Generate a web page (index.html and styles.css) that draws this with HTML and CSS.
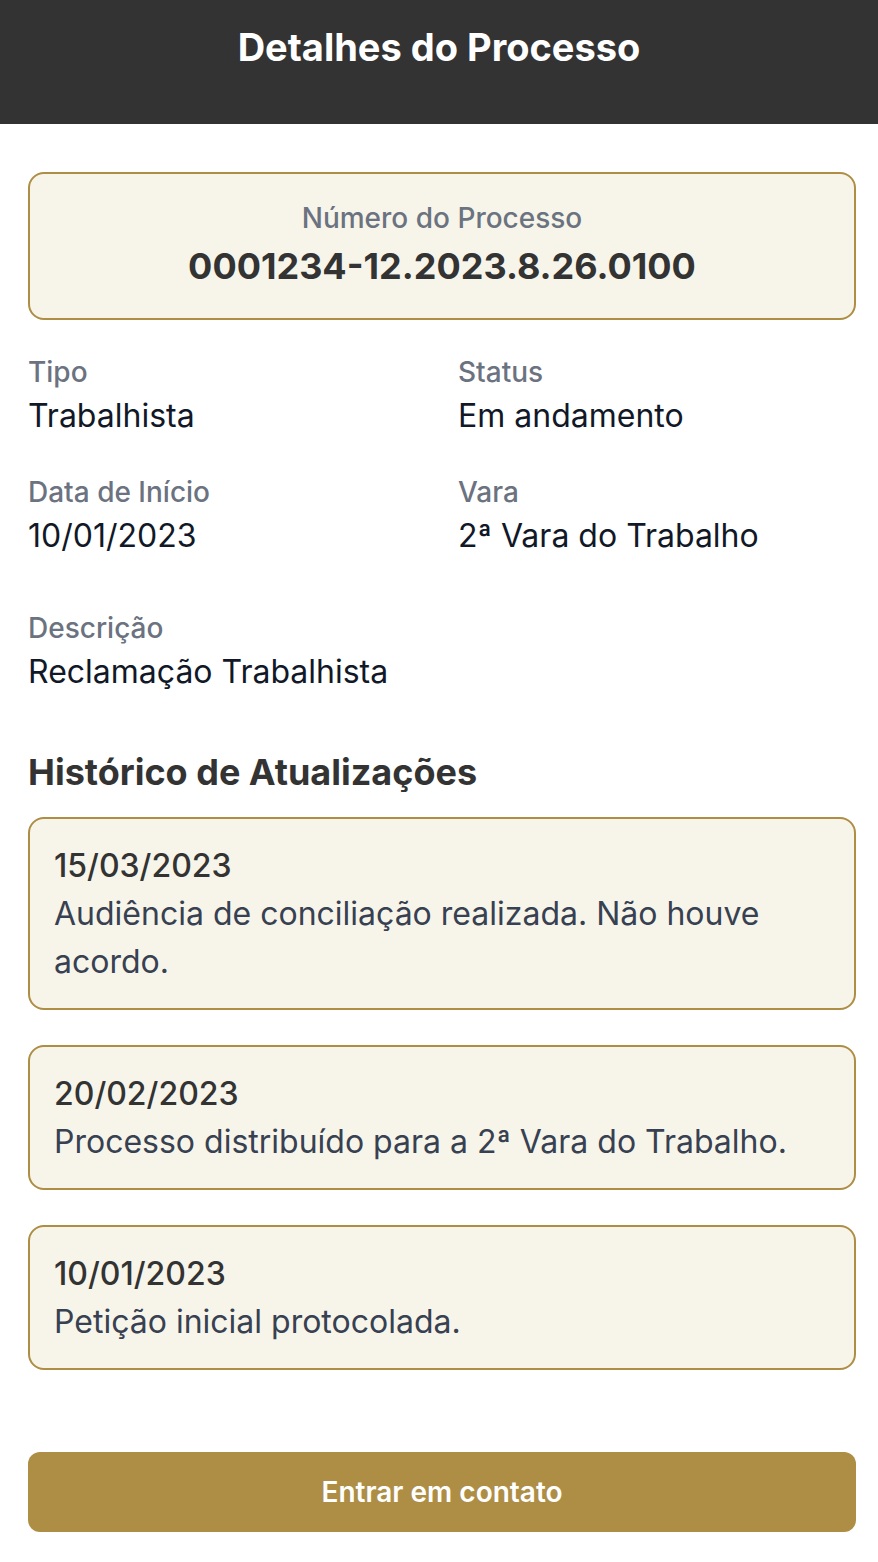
FILE: index.html
```html
<!DOCTYPE html>
<html lang="pt-BR">
<head>
    <meta charset="UTF-8">
    <title>Detalhes do Processo</title>
    <link rel="stylesheet" href="styles.css">
</head>
<body>
    <header class="topbar">
        <h1>Detalhes do Processo</h1>
    </header>

    <main class="content">
        <!-- número do processo -->
        <section class="process-number">
            <div class="process-label">Número do Processo</div>
            <div class="process-value">0001234-12.2023.8.26.0100</div>
        </section>

        <div class="info-grid">
            <div class="field">
                <div class="field-label">Tipo</div>
                <div class="field-value">Trabalhista</div>
            </div>
            <div class="field">
                <div class="field-label">Status</div>
                <div class="field-value">Em andamento</div>
            </div>
            <div class="field">
                <div class="field-label">Data de Início</div>
                <div class="field-value">10/01/2023</div>
            </div>
            <div class="field">
                <div class="field-label">Vara</div>
                <div class="field-value">2ª Vara do Trabalho</div>
            </div>
        </div>

        <div class="field description">
            <div class="field-label">Descrição</div>
            <div class="field-value">Reclamação Trabalhista</div>
        </div>

        <!-- histórico -->
        <h2 class="section-title">Histórico de Atualizações</h2>
        <div class="history">
            <div class="history-card">
                <div class="history-date">15/03/2023</div>
                <div class="history-text">Audiência de conciliação realizada. Não houve acordo.</div>
            </div>
            <div class="history-card">
                <div class="history-date">20/02/2023</div>
                <div class="history-text">Processo distribuído para a 2ª Vara do Trabalho.</div>
            </div>
            <div class="history-card">
                <div class="history-date">10/01/2023</div>
                <div class="history-text">Petição inicial protocolada.</div>
            </div>
        </div>

        <button class="contact-btn">Entrar em contato</button>
    </main>
</body>
</html>
```

FILE: styles.css
```css
:root {
    --dark: #333333;
    --gold: #ae8e45;
    --cream: #f7f5ea;
    --muted: #6b7280;
}

* {
    box-sizing: border-box;
}

body {
    margin: 0;
    font-family: Inter, "Noto Sans", sans-serif;
    background: #fff;
    color: #111827;
}

.topbar {
    background: var(--dark);
    color: #fff;
    height: 124px;
    padding-top: 24px;
    text-align: center;
}

.topbar h1 {
    margin: 0;
    font-size: 38px;
    line-height: 46px;
    font-weight: 700;
}

.content {
    padding: 48px 22px 32px 28px;
}

.process-number {
    background: var(--cream);
    border: 2px solid var(--gold);
    border-radius: 16px;
    padding: 26px 16px 26px;
    text-align: center;
    margin-bottom: 34px;
}

.process-label {
    color: var(--muted);
    font-size: 28px;
    line-height: 36px;
    font-weight: 500;
}

.process-value {
    margin-top: 4px;
    color: var(--dark);
    font-size: 36px;
    line-height: 52px;
    font-weight: 700;
}

.info-grid {
    display: grid;
    grid-template-columns: 1fr 1fr;
    column-gap: 32px;
    row-gap: 36px;
}

.field-label {
    color: var(--muted);
    font-size: 28px;
    line-height: 36px;
    font-weight: 500;
}

.field-value {
    margin-top: 4px;
    font-size: 32px;
    line-height: 44px;
}

.description {
    margin-top: 52px;
}

.section-title {
    margin: 54px 0 21px;
    color: var(--dark);
    font-size: 36px;
    line-height: 48px;
    font-weight: 700;
}

.history {
    display: flex;
    flex-direction: column;
    gap: 35px;
}

.history-card {
    background: var(--cream);
    border: 2px solid var(--gold);
    border-radius: 16px;
    padding: 25px 24px 22px;
}

.history-date {
    color: var(--dark);
    font-size: 32px;
    line-height: 44px;
    font-weight: 500;
    margin-bottom: 2px;
}

.history-text {
    color: #374151;
    font-size: 32px;
    line-height: 48px;
}

.contact-btn {
    display: block;
    width: 100%;
    margin-top: 82px;
    height: 80px;
    border: none;
    border-radius: 12px;
    background: var(--gold);
    color: #fff;
    font-family: inherit;
    font-size: 28px;
    font-weight: 600;
    cursor: pointer;
}
```
